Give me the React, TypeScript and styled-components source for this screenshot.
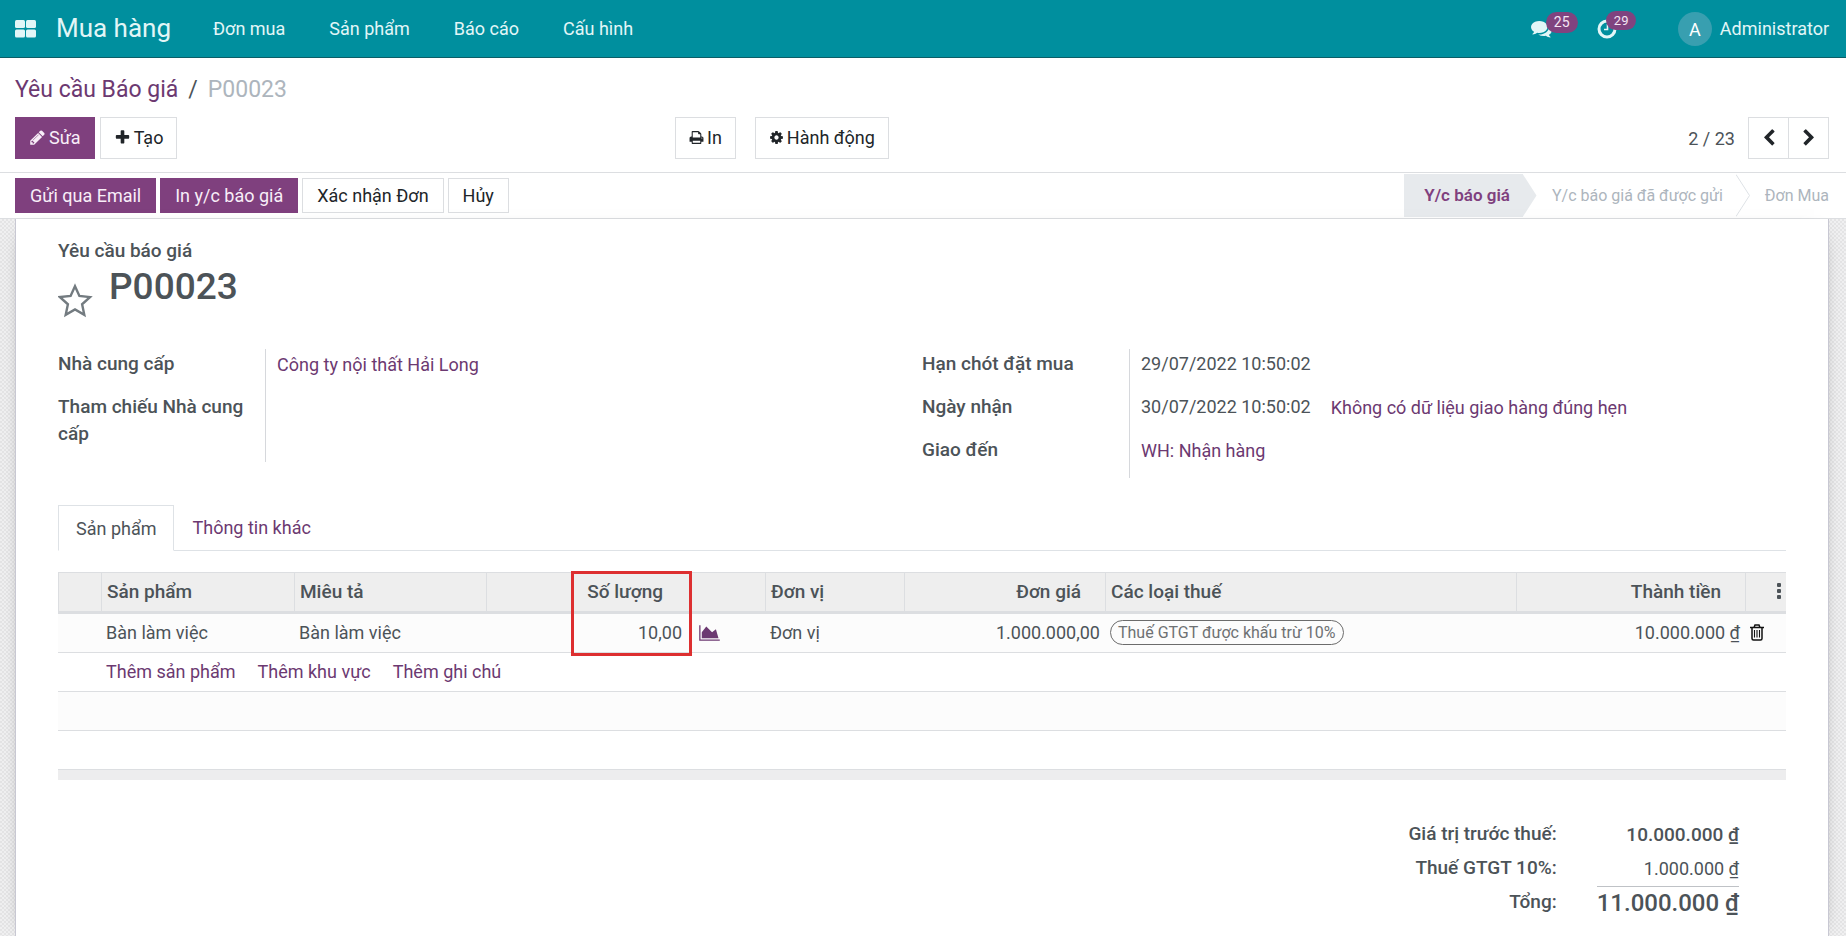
import React from 'react';
import styled, { createGlobalStyle, css } from 'styled-components';

const GlobalStyle = createGlobalStyle`
  *, *::before, *::after { box-sizing: border-box; }
  body {
    margin: 0;
    background: #fff;
    color: #4c5358;
    font: 400 18px/27px Roboto, "Noto Sans", sans-serif;
  }
  button { font: inherit; color: inherit; cursor: pointer; }
  a { color: #6c3971; text-decoration: none; }
`;

const Page = styled.div`
  min-height: 100vh;
  display: flex;
  flex-direction: column;
`;

/* ---------- navbar ---------- */

const Navbar = styled.header`
  height: 58px;
  display: flex;
  align-items: center;
  padding: 0 17px 0 15px;
  background: #008f9e;
  border-bottom: 1px solid #0b5e67;
  color: #e2f6f7;
  a { color: inherit; }
`;

const IconButton = styled.button`
  display: flex;
  padding: 0;
  border: 0;
  background: none;
`;

const Brand = styled.a`
  margin-left: 20px;
  font-size: 26px;
`;

const Menu = styled.nav`
  display: flex;
  gap: 44px;
  margin-left: 42px;
`;

const Systray = styled.div`
  display: flex;
  align-items: center;
  margin-left: auto;
`;

const TrayButton = styled(IconButton)<{ $gap: number }>`
  position: relative;
  width: 21px;
  margin-right: ${p => p.$gap}px;
`;

const Badge = styled.span<{ $small?: boolean }>`
  position: absolute;
  left: ${p => (p.$small ? 9 : 15)}px;
  bottom: ${p => (p.$small ? 9 : 6)}px;
  padding: 0 8px;
  border-radius: 11px;
  background: #80437f;
  color: #f4e6f4;
  font-size: ${p => (p.$small ? 13 : 14)}px;
  line-height: ${p => (p.$small ? 19 : 21)}px;
`;

const User = styled.button`
  display: flex;
  align-items: center;
  gap: 8px;
  padding: 0;
  border: 0;
  background: none;
`;

const Avatar = styled.span`
  width: 34px;
  height: 34px;
  border-radius: 50%;
  background: #389fb0;
  color: #fff;
  line-height: 35px;
  text-align: center;
`;

/* ---------- control panel ---------- */

const ControlPanel = styled.section`
  padding: 16px 17px 13px 15px;
  border-bottom: 1px solid #dcdee1;
`;

const Breadcrumb = styled.nav`
  display: flex;
  gap: 10px;
  margin-bottom: 12px;
  font-size: 23px;
  line-height: 31px;
`;

const Muted = styled.span`
  color: #adb5bd;
`;

const ActionBar = styled.div`
  display: grid;
  grid-template-columns: 660px 1fr auto;
  align-items: center;
`;

const Group = styled.div<{ $gap: number }>`
  display: flex;
  align-items: center;
  gap: ${p => p.$gap}px;
`;

const Button = styled.button<{ $primary?: boolean; $compact?: boolean }>`
  display: inline-flex;
  align-items: center;
  gap: 3px;
  height: ${p => (p.$compact ? 35 : 42)}px;
  padding: ${p => (p.$compact ? '0 14px' : '0 13px 2px')};
  border: 1px solid #dcdee1;
  background: #fff;
  color: #212529;
  white-space: nowrap;
  ${p => p.$primary && css`
    background: #7f407e;
    border-color: #7f407e;
    color: #f8eef8;
  `}
`;

const PagerText = styled.span`
  margin-right: 8px;
`;

const PagerButton = styled(Button)`
  width: 41px;
  padding: 0;
  justify-content: center;
  & + & { margin-left: -6px; }
`;

/* ---------- status bar ---------- */

const StatusRow = styled.section`
  display: flex;
  justify-content: space-between;
  align-items: center;
  height: 46px;
  padding: 0 17px 0 15px;
  border-bottom: 1px solid #dcdee1;
`;

const Steps = styled.ol`
  display: flex;
  margin: 0;
  padding: 0;
  list-style: none;
`;

const Step = styled.li<{ $active?: boolean }>`
  display: flex;
  align-items: center;
  height: 43px;
  font-size: 16px;
  color: #adb5bd;
  span { padding: 0 13px 0 15px; }
  &:last-child span { padding-right: 0; }
  ${p => p.$active && css`
    color: #7f407e;
    font-size: 17px;
    font-weight: 600;
    span {
      height: 43px;
      padding-left: 20px;
      line-height: 43px;
      background: #e7eaed;
    }
  `}
`;

/* ---------- form sheet ---------- */

const SheetArea = styled.main`
  flex: 1;
  display: flex;
  padding: 0 17px 0 15px;
  background: repeating-conic-gradient(#e4e4e5 0 25%, #f0f0f1 0 50%) 0 0 / 4px 4px;
`;

const Sheet = styled.article`
  flex: 1;
  min-width: 0;
  padding: 18px 42px 16px;
  background: #fff;
  border: solid #c8c8d3;
  border-width: 0 1px;
  box-shadow: 0 5px 20px -15px #000;
`;

const TitleCaption = styled.div`
  font-size: 19px;
  font-weight: 500;
`;

const TitleRow = styled.div`
  display: flex;
  gap: 16px;
  h1 {
    margin: 0;
    font-size: 37px;
    font-weight: 500;
    line-height: 46px;
  }
  button { margin-top: 19px; }
`;

const Columns = styled.div`
  display: grid;
  grid-template-columns: 1fr 1fr;
  align-items: start;
  margin-top: 31px;
`;

const Fields = styled.dl`
  display: grid;
  grid-template-columns: 208px 1fr;
  margin: 0;
`;

const Label = styled.dt`
  padding: 1px 10px 15px 0;
  font-size: 19px;
  font-weight: 500;
  border-right: 1px solid #d6d8dc;
`;

const Value = styled.dd`
  display: flex;
  gap: 20px;
  margin: 0;
  padding: 1px 0 14px 11px;
  a { padding-top: 1px; }
`;

const Tabs = styled.div`
  display: flex;
  margin-top: 27px;
  border-bottom: 1px solid #dee2e6;
`;

const Tab = styled.button<{ $active?: boolean }>`
  height: 45px;
  margin-bottom: -1px;
  padding: 0 17px;
  border: 1px solid transparent;
  background: none;
  color: #6c3971;
  ${p => p.$active && css`
    height: 46px;
    border-color: #dee2e6 #dee2e6 #fff;
    background: #fff;
    color: #4c5358;
  `}
`;

const Lines = styled.table`
  width: 100%;
  margin-top: 21px;
  table-layout: fixed;
  border-collapse: separate;
  border-spacing: 0;
  tbody tr { height: 39px; }
  tbody tr:nth-child(odd) { background: #fcfcfc; }
  td { padding: 0 5px 1px; border-bottom: 1px solid #dcdee1; white-space: nowrap; }
  tfoot td { height: 10px; border: 0; background: #ededee; }
`;

const Head = styled.th<{ $right?: boolean; $plain?: boolean }>`
  position: relative;
  height: 42px;
  padding: 0 ${p => (p.$right ? 24 : 5)}px 2px 5px;
  background: #eeeeee;
  border: solid #dcdee1;
  border-width: 1px 0 3px ${p => (p.$plain ? 0 : 1)}px;
  font-size: 19px;
  font-weight: 500;
  text-align: ${p => (p.$right ? 'right' : 'left')};
  white-space: nowrap;
`;

const Num = styled.td`
  text-align: right;
`;

const ForecastCell = styled.td`
  && { padding-left: 12px; }
`;

const Highlight = styled.span`
  position: absolute;
  z-index: 1;
  top: -2px;
  left: -2px;
  right: -5px;
  height: 85px;
  border: 3px solid #dd2f30;
  pointer-events: none;
`;

const Tag = styled.span`
  display: block;
  width: max-content;
  padding: 0 7px;
  border: 1px solid #6c6c6c;
  border-radius: 13px;
  color: #6e7173;
  font-size: 16px;
  line-height: 23px;
`;

const Totals = styled.dl`
  display: grid;
  grid-template-columns: auto auto;
  justify-content: end;
  column-gap: 40px;
  margin: 38px 47px 0 0;
  text-align: right;
  dt { font-size: 19px; font-weight: 500; line-height: 31px; }
  dd { margin: 0; line-height: 34px; }
  dd.strong { font-size: 19px; font-weight: 500; }
  dd.total {
    border-top: 1px solid #bfc2c6;
    font-size: 24px;
    font-weight: 500;
    line-height: 32px;
  }
`;

/* ---------- icons ---------- */

const paths = {
  pencil: 'M491 1536l91-91-235-235-91 91v107h128v128h107zm523-928q0-22-22-22-10 0-17 7l-542 542q-7 7-7 17 0 22 22 22 10 0 17-7l542-542q7-7 7-17zm-54-192l416 416-832 832h-416v-416zm683 96q0 53-37 90l-166 166-416-416 166-165q36-38 90-38 53 0 91 38l235 234q37 39 37 91z',
  plus: 'M1600 736v192q0 40-28 68t-68 28h-416v416q0 40-28 68t-68 28h-192q-40 0-68-28t-28-68v-416h-416q-40 0-68-28t-28-68v-192q0-40 28-68t68-28h416v-416q0-40 28-68t68-28h192q40 0 68 28t28 68v416h416q40 0 68 28t28 68z',
  print: 'M448 1536h896v-256h-896v256zm0-640h896v-384h-160q-40 0-68-28t-28-68v-160h-640v640zm1152 64q0-26-19-45t-45-19-45 19-19 45 19 45 45 19 45-19 19-45zm128 0v416q0 13-9.5 22.5t-22.5 9.5h-224v160q0 40-28 68t-68 28h-960q-40 0-68-28t-28-68v-160h-224q-13 0-22.5-9.5t-9.5-22.5v-416q0-79 56.5-135.5t135.5-56.5h64v-544q0-40 28-68t68-28h672q40 0 88 20t76 48l152 152q28 28 48 76t20 88v256h64q79 0 135.5 56.5t56.5 135.5z',
  cog: 'M1152 896q0-106-75-181t-181-75-181 75-75 181 75 181 181 75 181-75 75-181zm512-109v222q0 12-8 23t-20 13l-185 28q-19 54-39 91 35 50 107 138 10 12 10 25t-9 23q-27 37-99 108t-94 71q-12 0-26-9l-138-108q-44 23-91 38-16 136-29 186-7 28-36 28h-222q-14 0-24.5-8.5t-11.5-21.5l-28-184q-49-16-90-37l-141 107q-10 9-25 9-14 0-25-11-126-114-165-168-7-10-7-23 0-12 8-23 15-21 51-66.5t54-70.5q-27-50-41-99l-183-27q-13-2-21-12.5t-8-23.5v-222q0-12 8-23t19-13l186-28q14-46 39-92-40-57-107-138-10-12-10-24 0-10 9-23 26-36 98.5-107.5t94.5-71.5q13 0 26 10l138 107q44-23 91-38 16-136 29-186 7-28 36-28h222q14 0 24.5 8.5t11.5 21.5l28 184q49 16 90 37l142-107q9-9 24-9 13 0 25 10 129 119 165 170 7 8 7 22 0 12-8 23-15 21-51 66.5t-54 70.5q26 50 41 98l183 28q13 2 21 12.5t8 23.5z',
  left: 'M1427 301l-531 531 531 531q19 19 19 45t-19 45l-166 166q-19 19-45 19t-45-19l-742-742q-19-19-19-45t19-45l742-742q19-19 45-19t45 19l166 166q19 19 19 45t-19 45z',
  right: 'M1363 877l-742 742q-19 19-45 19t-45-19l-166-166q-19-19-19-45t19-45l531-531-531-531q-19-19-19-45t19-45l166-166q19-19 45-19t45 19l742 742q19 19 19 45t-19 45z',
  comments: 'M1408 768q0 139-94 257t-256.5 186.5-353.5 68.5q-86 0-176-16-124 88-278 128-36 9-86 16h-3q-11 0-20.5-8t-11.5-21q-1-3-1-6.5t.5-6.5 2-6l2.5-5 3.5-5.5 4-5 4.5-5 4-4.5q5-6 23-25t26-29.5 22.5-29 25-38.5 20.5-44q-124-72-195-177t-71-224q0-139 94-257t256.5-186.5 353.5-68.5 353.5 68.5 256.5 186.5 94 257zm384 256q0 120-71 224.5t-195 176.5q10 24 20.5 44t25 38.5 22.5 29 26 29.5 23 25q1 1 4 4.5t4.5 5 4 5 3.5 5.5l2.5 5 2 6 .5 6.5-1 6.5q-3 14-13 22t-22 7q-50-7-86-16-154-40-278-128-90 16-176 16-271 0-472-132 58 4 88 4 161 0 309-45t264-129q125-92 192-212t67-254q0-77-23-152 129 71 204 178t75 230z',
};

const Icon = ({ name, size }: { name: keyof typeof paths; size: number }) => (
  <svg width={size} height={size} viewBox="0 0 1792 1792" fill="currentColor" aria-hidden="true">
    <path d={paths[name]} />
  </svg>
);

const AppsIcon = () => (
  <svg width="21" height="18" viewBox="0 0 21 18" fill="currentColor" aria-hidden="true">
    <rect width="10" height="8" rx="1.5" />
    <rect x="11" width="10" height="8" rx="1.5" />
    <rect y="9.5" width="10" height="8" rx="1.5" />
    <rect x="11" y="9.5" width="10" height="8" rx="1.5" />
  </svg>
);

const ClockIcon = () => (
  <svg width="20" height="20" viewBox="0 0 20 20" fill="none" stroke="currentColor" aria-hidden="true">
    <circle cx="10" cy="10" r="8" strokeWidth="3" />
    <path d="M10.5 5v5.5H7" strokeWidth="1.6" />
  </svg>
);

const StarIcon = () => (
  <svg width="35" height="35" viewBox="0 0 35 35" fill="none" stroke="#737b80" strokeWidth="2.4" aria-hidden="true">
    <path d="M17 3.200L21.400 12.900L32 14.100L24.100 21.300L26.300 31.800L17 26.500L7.700 31.800L9.900 21.300L2 14.100L12.600 12.900Z" />
  </svg>
);

const ChartIcon = () => (
  <svg width="21" height="18" viewBox="0 0 2048 1792" fill="#6c3971" aria-hidden="true">
    <path d="M2048 1536v128h-2048v-1536h128v1408h1920zm-384-1024l256 896h-1664v-576l448-576 576 576z" />
  </svg>
);

const TrashIcon = () => (
  <svg width="14" height="17" viewBox="0 0 14 17" fill="none" stroke="#111" aria-hidden="true">
    <path d="M0 3.500h14M4 3.500L5 1h4l1 2.500M2 3.500v11q0 1.500 1.500 1.500h7q1.500 0 1.500-1.500v-11" strokeWidth="1.500" />
    <path d="M4.500 6v7.500M7 6v7.500M9.500 6v7.500" strokeWidth="1.100" />
  </svg>
);

const DotsIcon = () => (
  <svg width="4" height="16" viewBox="0 0 4 16" fill="currentColor" aria-hidden="true">
    <rect width="4" height="4" rx="1" />
    <rect y="6" width="4" height="4" rx="1" />
    <rect y="12" width="4" height="4" rx="1" />
  </svg>
);

const StepArrow = ({ filled }: { filled?: boolean }) => (
  <svg width="14" height="43" viewBox="0 0 14 43" fill={filled ? '#e7eaed' : 'none'} stroke={filled ? 'none' : '#dee2e6'} aria-hidden="true">
    <path d="M0 0.500L13.500 21.500L0 42.500" />
  </svg>
);

/* ---------- page ---------- */

const columnWidths = [43, 193, 192, 86, 115, 78, 139, 201, 411, 229, 41];

const AddLinks = styled.div`
  display: flex;
  gap: 22px;
`;

const DotsButton = styled(IconButton)`
  margin-left: auto;
`;

export default function App() {
  return (
    <Page>
      <GlobalStyle />
      <Navbar>
        <IconButton aria-label="Ứng dụng"><AppsIcon /></IconButton>
        <Brand href="#">Mua hàng</Brand>
        <Menu>
          <a href="#">Đơn mua</a>
          <a href="#">Sản phẩm</a>
          <a href="#">Báo cáo</a>
          <a href="#">Cấu hình</a>
        </Menu>
        <Systray>
          <TrayButton $gap={45} aria-label="Tin nhắn">
            <Icon name="comments" size={21} />
            <Badge>25</Badge>
          </TrayButton>
          <TrayButton $gap={60} aria-label="Hoạt động">
            <ClockIcon />
            <Badge $small>29</Badge>
          </TrayButton>
          <User><Avatar>A</Avatar>Administrator</User>
        </Systray>
      </Navbar>

      <ControlPanel>
        <Breadcrumb>
          <a href="#">Yêu cầu Báo giá</a>
          <span>/</span>
          <Muted>P00023</Muted>
        </Breadcrumb>
        <ActionBar>
          <Group $gap={5}>
            <Button $primary><Icon name="pencil" size={17} />Sửa</Button>
            <Button><Icon name="plus" size={17} />Tạo</Button>
          </Group>
          <Group $gap={19}>
            <Button><Icon name="print" size={15} />In</Button>
            <Button><Icon name="cog" size={15} />Hành động</Button>
          </Group>
          <Group $gap={5}>
            <PagerText>2 / 23</PagerText>
            <PagerButton aria-label="Trước"><Icon name="left" size={18} /></PagerButton>
            <PagerButton aria-label="Sau"><Icon name="right" size={18} /></PagerButton>
          </Group>
        </ActionBar>
      </ControlPanel>

      <StatusRow>
        <Group $gap={4}>
          <Button $primary $compact>Gửi qua Email</Button>
          <Button $primary $compact>In y/c báo giá</Button>
          <Button $compact>Xác nhận Đơn</Button>
          <Button $compact>Hủy</Button>
        </Group>
        <Steps>
          <Step $active><span>Y/c báo giá</span><StepArrow filled /></Step>
          <Step><span>Y/c báo giá đã được gửi</span><StepArrow /></Step>
          <Step><span>Đơn Mua</span></Step>
        </Steps>
      </StatusRow>

      <SheetArea>
        <Sheet>
          <TitleCaption>Yêu cầu báo giá</TitleCaption>
          <TitleRow>
            <IconButton aria-label="Ưu tiên"><StarIcon /></IconButton>
            <h1>P00023</h1>
          </TitleRow>

          <Columns>
            <Fields>
              <Label>Nhà cung cấp</Label>
              <Value><a href="#">Công ty nội thất Hải Long</a></Value>
              <Label>Tham chiếu Nhà cung cấp</Label>
              <Value />
            </Fields>
            <Fields>
              <Label>Hạn chót đặt mua</Label>
              <Value>29/07/2022 10:50:02</Value>
              <Label>Ngày nhận</Label>
              <Value>
                30/07/2022 10:50:02
                <a href="#">Không có dữ liệu giao hàng đúng hẹn</a>
              </Value>
              <Label>Giao đến</Label>
              <Value><a href="#">WH: Nhận hàng</a></Value>
            </Fields>
          </Columns>

          <Tabs role="tablist">
            <Tab role="tab" aria-selected="true" $active>Sản phẩm</Tab>
            <Tab role="tab" aria-selected="false">Thông tin khác</Tab>
          </Tabs>

          <Lines>
            <colgroup>
              {columnWidths.map((width, i) => <col key={i} width={width} />)}
            </colgroup>
            <thead>
              <tr>
                <Head />
                <Head>Sản phẩm</Head>
                <Head>Miêu tả</Head>
                <Head />
                <Head $right>Số lượng<Highlight /></Head>
                <Head $plain />
                <Head>Đơn vị</Head>
                <Head $right>Đơn giá</Head>
                <Head>Các loại thuế</Head>
                <Head $right>Thành tiền</Head>
                <Head><DotsButton aria-label="Cột tùy chọn"><DotsIcon /></DotsButton></Head>
              </tr>
            </thead>
            <tbody>
              <tr>
                <td />
                <td>Bàn làm việc</td>
                <td>Bàn làm việc</td>
                <td />
                <Num>10,00</Num>
                <ForecastCell><IconButton aria-label="Dự báo"><ChartIcon /></IconButton></ForecastCell>
                <td>Đơn vị</td>
                <Num>1.000.000,00</Num>
                <td><Tag>Thuế GTGT được khấu trừ 10%</Tag></td>
                <Num>10.000.000 ₫</Num>
                <td><IconButton aria-label="Xóa"><TrashIcon /></IconButton></td>
              </tr>
              <tr>
                <td />
                <td colSpan={10}>
                  <AddLinks>
                    <a href="#">Thêm sản phẩm</a>
                    <a href="#">Thêm khu vực</a>
                    <a href="#">Thêm ghi chú</a>
                  </AddLinks>
                </td>
              </tr>
              <tr><td colSpan={11} /></tr>
              <tr><td colSpan={11} /></tr>
            </tbody>
            <tfoot>
              <tr><td colSpan={11} /></tr>
            </tfoot>
          </Lines>

          <Totals>
            <dt>Giá trị trước thuế:</dt>
            <dd className="strong">10.000.000 ₫</dd>
            <dt>Thuế GTGT 10%:</dt>
            <dd>1.000.000 ₫</dd>
            <dt>Tổng:</dt>
            <dd className="total">11.000.000 ₫</dd>
          </Totals>
        </Sheet>
      </SheetArea>
    </Page>
  );
}
